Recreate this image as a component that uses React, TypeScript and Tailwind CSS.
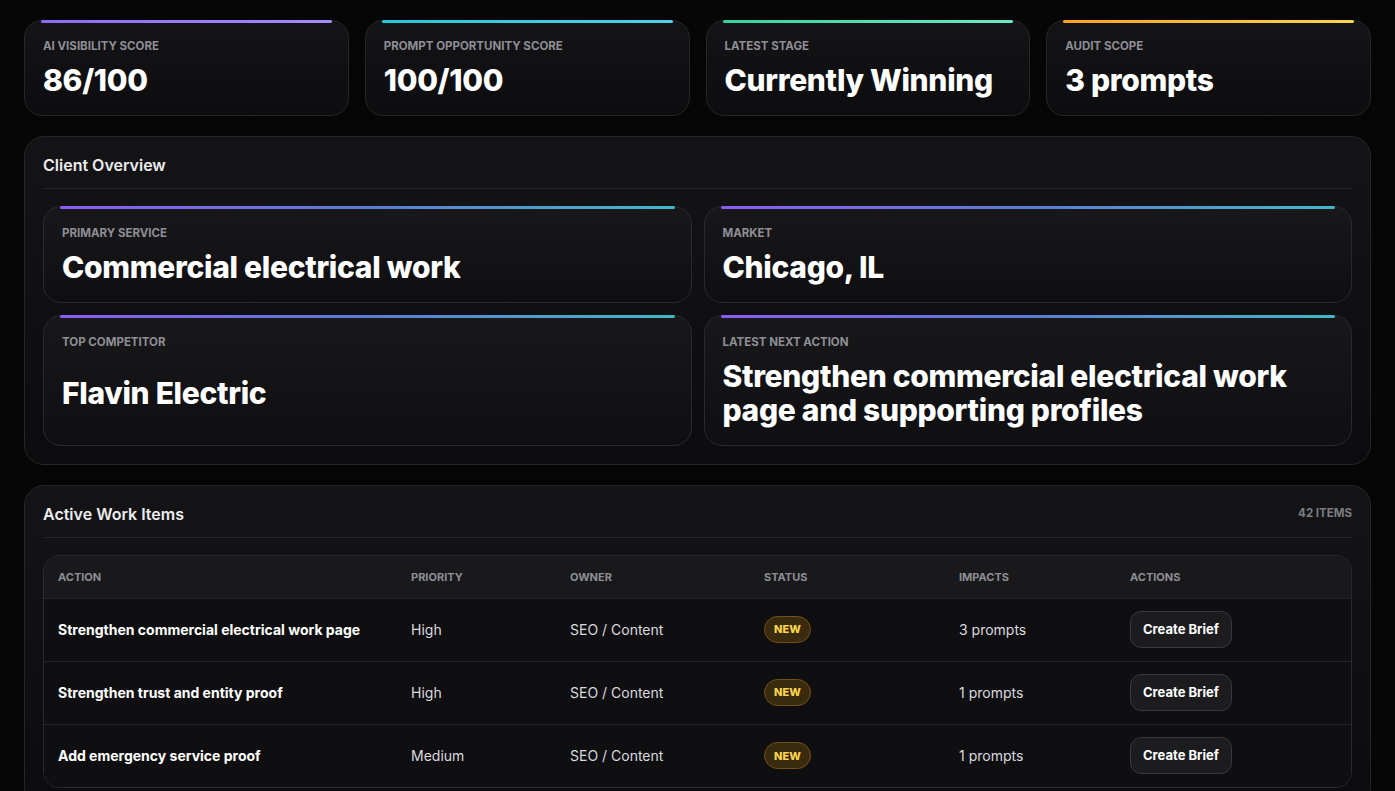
import React from 'react';

const stats = [
    {label: 'AI Visibility Score', value: '86/100', accent: 'from-[#8b6cf0] to-[#a78bfa]'},
    {label: 'Prompt Opportunity Score', value: '100/100', accent: 'from-[#22c7dd] to-[#4fd1e6]'},
    {label: 'Latest Stage', value: 'Currently Winning', accent: 'from-[#34d3a0] to-[#6ee7c7]'},
    {label: 'Audit Scope', value: '3 prompts', accent: 'from-[#f5a524] to-[#fcd34d]'},
];

const workItems = [
    {action: 'Strengthen commercial electrical work page', priority: 'High', owner: 'SEO / Content', status: 'NEW', impacts: '3 prompts'},
    {action: 'Strengthen trust and entity proof', priority: 'High', owner: 'SEO / Content', status: 'NEW', impacts: '1 prompts'},
    {action: 'Add emergency service proof', priority: 'Medium', owner: 'SEO / Content', status: 'NEW', impacts: '1 prompts'},
];

const StatCard = ({label, value, accent}: { label: string, value: string, accent: string }) => (
    <div className="relative h-24 rounded-[18px] border border-[#26262a] bg-gradient-to-b from-[#141416] to-[#0d0d0f] px-[18px] pt-[17px]">
        <div className={`absolute left-4 right-4 top-[-1px] h-[3px] rounded-full bg-gradient-to-r ${accent}`}/>
        <div className="text-[11.5px] font-bold uppercase leading-4 text-[#8e8e94]">{label}</div>
        <div className="mt-[8px] text-[30px] font-extrabold leading-9 tracking-[-0.01em] text-white">{value}</div>
    </div>
);

const InfoCard = ({label, value}: { label: string, value: string }) => (
    <div className="relative flex min-h-24 flex-col rounded-[18px] border border-[#2a2a2e] bg-gradient-to-b from-[#18181b] to-[#0f0f11] px-[18px] pt-[18px] pb-[18px]">
        <div className="absolute left-4 right-4 top-[-1px] h-[3px] rounded-full bg-gradient-to-r from-[#8b5cf6] via-[#5b7bd6] to-[#3fb8c9]"/>
        <div className="text-[11.5px] font-bold uppercase leading-4 text-[#8e8e94]">{label}</div>
        <div className="mt-[9px] flex flex-1 items-center">
            <div className="text-[30px] font-extrabold leading-[34px] tracking-[-0.01em] text-white">{value}</div>
        </div>
    </div>
);

export default function App() {
    return (
        <div
            className="min-h-screen bg-[#060606] px-6 pt-5 pb-10 text-white"
            style={{fontFamily: 'Inter, "Noto Sans", sans-serif'}}
        >
            <div className="grid grid-cols-4 gap-4">
                {stats.map((s) => (
                    <StatCard key={s.label} {...s}/>
                ))}
            </div>

            <section className="mt-5 rounded-[20px] border border-[#26262a] bg-gradient-to-b from-[#141416] to-[#0c0c0e] px-[18px] pt-[18px] pb-[18px]">
                <div className="border-b border-[#26262a] pb-[13px] text-[16px] font-semibold leading-5 text-[#ededf0]">
                    Client Overview
                </div>
                <div className="mt-[17px] grid grid-cols-2 gap-3">
                    <InfoCard label="Primary Service" value="Commercial electrical work"/>
                    <InfoCard label="Market" value="Chicago, IL"/>
                    <InfoCard label="Top Competitor" value="Flavin Electric"/>
                    <InfoCard label="Latest Next Action" value="Strengthen commercial electrical work page and supporting profiles"/>
                </div>
            </section>

            <section className="mt-5 rounded-[20px] border border-[#26262a] bg-gradient-to-b from-[#141416] to-[#0c0c0e] px-[18px] pt-[18px] pb-[18px]">
                <div className="flex items-center justify-between border-b border-[#26262a] pb-[13px]">
                    <div className="text-[16px] font-semibold leading-5 text-[#ededf0]">Active Work Items</div>
                    <div className="text-[11.5px] font-bold uppercase text-[#7c7c82]">42 items</div>
                </div>
                <div className="mt-[17px] overflow-hidden rounded-[16px] border border-[#2a2a2e]">
                    <table className="w-full table-fixed border-collapse text-left">
                        <colgroup>
                            <col className="w-[367px]"/>
                            <col className="w-[159px]"/>
                            <col className="w-[194px]"/>
                            <col className="w-[195px]"/>
                            <col className="w-[171px]"/>
                            <col/>
                        </colgroup>
                        <thead className="bg-[#19191c]">
                        <tr className="h-[42px] text-[11px] font-bold uppercase text-[#8e8e94]">
                            <th className="pl-[14px] font-bold">Action</th>
                            <th className="font-bold">Priority</th>
                            <th className="font-bold">Owner</th>
                            <th className="font-bold">Status</th>
                            <th className="font-bold">Impacts</th>
                            <th className="font-bold">Actions</th>
                        </tr>
                        </thead>
                        <tbody className="bg-[#0f0f11]">
                        {workItems.map((item) => (
                            <tr key={item.action} className="h-[63px] border-t border-[#232327] text-[14px]">
                                <td className="pl-[14px] font-bold text-white">{item.action}</td>
                                <td className="text-[#dadade]">{item.priority}</td>
                                <td className="text-[#dadade]">{item.owner}</td>
                                <td>
                                    <span className="inline-flex h-[27px] items-center rounded-full border border-[#74501a] bg-[#3a2a0e] px-[9px] text-[11px] font-extrabold text-[#fcd34d]">
                                        {item.status}
                                    </span>
                                </td>
                                <td className="text-[#dadade]">{item.impacts}</td>
                                <td>
                                    <button className="h-[37px] rounded-[11px] border border-[#38383c] bg-[#1c1c1f] px-3 text-[13px] font-bold text-white">
                                        Create Brief
                                    </button>
                                </td>
                            </tr>
                        ))}
                        </tbody>
                    </table>
                </div>
            </section>
        </div>
    );
}
